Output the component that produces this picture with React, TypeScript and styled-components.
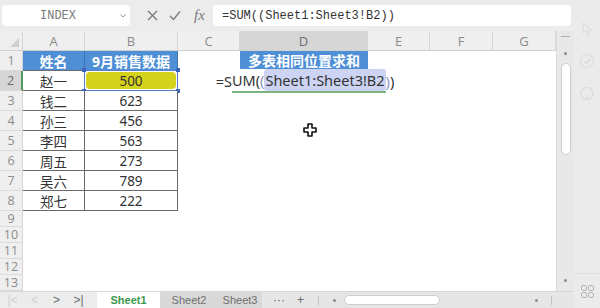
import React from 'react';
import styled, { createGlobalStyle } from 'styled-components';

const Global = createGlobalStyle`
  html, body { margin: 0; padding: 0; background: #ebebeb; }
  body { font-family: "Noto Sans", "Noto Sans CJK SC", sans-serif; }
  #root { width: 600px; height: 308px; }
`;

const Frame = styled.div`
  width: 600px;
  height: 308px;
  display: flex;
  overflow: hidden;
  background: #ebebeb;
`;

const Main = styled.div`
  width: 574px;
  display: flex;
  flex-direction: column;
`;

const FormulaBar = styled.div`
  height: 31px;
  display: flex;
  align-items: center;
  padding: 0 3px 0 2px;
  box-sizing: border-box;
  background: #ececec;
`;

const NameBox = styled.div`
  width: 128px;
  height: 21px;
  background: #fff;
  border-radius: 4px;
  display: flex;
  align-items: center;
  box-sizing: border-box;
  padding: 0 4px 0 0;
  font-family: "Liberation Mono", monospace;
  font-size: 12px;
  color: #7a7a7a;
`;

const NameText = styled.span`
  flex: 1;
  text-align: center;
  padding-right: 6px;
`;

const BarIcons = styled.div`
  display: flex;
  align-items: center;
  gap: 11px;
  margin-left: 17px;
  color: #7a7a7a;
`;

const Fx = styled.span`
  font-family: "Liberation Serif", serif;
  font-style: italic;
  font-size: 15px;
  color: #7a7a7a;
  margin-left: 2px;
`;

const FormulaInput = styled.div`
  margin-left: auto;
  width: 358px;
  height: 21px;
  background: #fff;
  border-radius: 4px;
  display: flex;
  align-items: center;
  padding-left: 9px;
  box-sizing: border-box;
  font-family: "Liberation Mono", monospace;
  font-size: 12px;
  color: #333;
`;

const Body = styled.div`
  display: flex;
  height: 260px;
`;

const Sheet = styled.div`
  position: relative;
  width: 556px;
  display: grid;
  grid-template-columns: 23px 62px 93px 62px 128px 62px 63px 63px;
  grid-template-rows: 20px repeat(8, 20px) repeat(5, 16px);
  background: #fff;
`;

const Corner = styled.div`
  background: #efefef;
  border-right: 1px solid #d6d6d6;
  border-bottom: 1px solid #d0d0d0;
  position: relative;
  &::after {
    content: '';
    position: absolute;
    right: 3px;
    bottom: 3px;
    border-style: solid;
    border-width: 0 0 9px 9px;
    border-color: transparent transparent #cfcfcf transparent;
  }
`;

const ColHead = styled.div<{ $active?: boolean }>`
  background: ${p => (p.$active ? '#d6d6d6' : '#efefef')};
  border-right: 1px solid #d6d6d6;
  border-bottom: 1px solid #d0d0d0;
  color: ${p => (p.$active ? '#707070' : '#8c8c8c')};
  font-family: "Open Sans", sans-serif;
  font-size: 13px;
  display: flex;
  align-items: center;
  justify-content: center;
`;

const RowHead = styled.div<{ $active?: boolean }>`
  background: ${p => (p.$active ? '#d6d6d6' : '#efefef')};
  border-right: ${p => (p.$active ? '2px solid #4f9c5e' : '1px solid #d6d6d6')};
  border-bottom: 1px solid #dadada;
  color: ${p => (p.$active ? '#6a6a6a' : '#8c8c8c')};
  font-family: "Open Sans", sans-serif;
  font-size: 12.5px;
  display: flex;
  align-items: center;
  justify-content: center;
`;

const Empty = styled.div``;

const TableCell = styled.div<{ $head?: boolean }>`
  position: relative;
  display: flex;
  align-items: center;
  justify-content: center;
  background: ${p => (p.$head ? '#4f8fd6' : '#fff')};
  color: ${p => (p.$head ? '#fff' : '#333')};
  font-weight: ${p => (p.$head ? 700 : 400)};
  font-size: ${p => (p.$head ? '14px' : '13.5px')};
  border-right: 1px solid ${p => (p.$head ? '#3f74b0' : '#6a6a6a')};
  border-bottom: 1px solid #6a6a6a;
  font-family: "Noto Sans", "Noto Sans CJK SC", sans-serif;
`;

const RefCell = styled.div`
  position: relative;
  border: 1px solid #5a7ec8;
  margin: -1px 0 0 -1px;
  padding: 1px;
  display: flex;
`;

const RefFill = styled.div`
  flex: 1;
  background: #d5d21c;
  border-radius: 4px;
  display: flex;
  align-items: center;
  justify-content: center;
  font-size: 13.5px;
  color: #333;
`;

const Handle = styled.span<{ $x: 'l' | 'r'; $y: 't' | 'b' }>`
  position: absolute;
  width: 4px;
  height: 4px;
  background: #3d66bb;
  ${p => (p.$x === 'l' ? 'left: -3px;' : 'right: -3px;')}
  ${p => (p.$y === 't' ? 'top: -3px;' : 'bottom: -3px;')}
`;

const TitleCell = styled.div`
  display: flex;
  align-items: center;
  justify-content: center;
  background: #4f8fd6;
  color: #fff;
  font-weight: 700;
  font-size: 14px;
  margin-bottom: 2px;
`;

const EditCell = styled.div`
  position: relative;
  z-index: 2;
  display: flex;
  align-items: center;
  justify-content: center;
  overflow: visible;
  white-space: nowrap;
  font-family: "Noto Sans", sans-serif;
  font-size: 14.5px;
  color: #333;
  padding-left: 4px;
`;

const Faint = styled.span`
  color: #8a98c0;
`;

const Underlined = styled.span`
  border-bottom: 2px solid #7db37d;
  padding-bottom: 1px;
`;

const Highlight = styled.span`
  background: #cdd3f3;
  border-radius: 3px;
  padding: 1px 1px;
`;

const Caret = styled.span`
  display: inline-block;
  width: 1px;
  height: 19px;
  background: #111;
  margin-left: 2px;
`;

const MoveCursor = styled.div`
  position: absolute;
  left: 303px;
  top: 89px;
  width: 14px;
  height: 14px;
`;

const VScroll = styled.div`
  width: 18px;
  background: #e8e8e8;
  border-left: 1px solid #dcdcdc;
  display: flex;
  flex-direction: column;
  align-items: center;
  box-sizing: border-box;
  padding-top: 5px;
`;

const Dash = styled.span`
  width: 9px;
  height: 1px;
  background: #b0b0b0;
`;

const Dot = styled.span<{ $mt?: number }>`
  width: 3px;
  height: 3px;
  border-radius: 50%;
  background: #8a8a8a;
  margin-top: ${p => p.$mt ?? 0}px;
`;

const VThumb = styled.div`
  width: 10px;
  height: 92px;
  margin-top: 8px;
  background: #fff;
  border: 1px solid #cdcdcd;
  border-radius: 6px;
  box-sizing: border-box;
`;

const TabBar = styled.div`
  height: 17px;
  display: flex;
  align-items: stretch;
  background: #e6e6e6;
  border-top: 1px solid #d6d6d6;
  box-sizing: border-box;
  font-family: "Liberation Sans", sans-serif;
  font-size: 11px;
`;

const Nav = styled.div`
  width: 97px;
  display: flex;
  align-items: center;
  padding-left: 5px;
  gap: 7px;
  box-sizing: border-box;
  background: #ececec;
`;

const NavGlyph = styled.span<{ $dim?: boolean }>`
  width: 15px;
  text-align: center;
  white-space: nowrap;
  color: ${p => (p.$dim ? '#cfcfcf' : '#6a6a6a')};
  font-size: 12px;
  line-height: 1;
`;

const Tab = styled.div<{ $active?: boolean; $w: number }>`
  width: ${p => p.$w}px;
  display: flex;
  align-items: center;
  justify-content: center;
  background: ${p => (p.$active ? '#fff' : '#d9d9d9')};
  color: ${p => (p.$active ? '#3d9a4d' : '#6e6e6e')};
  font-weight: ${p => (p.$active ? 700 : 400)};
`;

const TabExtra = styled.div`
  display: flex;
  align-items: center;
  gap: 12px;
  padding-left: 11px;
  color: #6a6a6a;
  font-size: 12px;
`;

const HScroll = styled.div`
  flex: 1;
  display: flex;
  align-items: center;
  padding-left: 14px;
`;

const Sep = styled.span`
  width: 1px;
  height: 9px;
  background: #c4c4c4;
`;

const HThumb = styled.div`
  width: 96px;
  height: 10px;
  margin-left: 8px;
  background: #fff;
  border: 1px solid #cdcdcd;
  border-radius: 6px;
  box-sizing: border-box;
`;

const Spacer = styled.span<{ $fixed?: number }>`
  flex: ${p => (p.$fixed ? `0 0 ${p.$fixed}px` : '1')};
`;

const Side = styled.div`
  flex: 1;
  display: flex;
  flex-direction: column;
  align-items: center;
  padding-top: 22px;
  gap: 17px;
  background: #ebebeb;
`;

const SideBottom = styled.div`
  margin-top: auto;
  width: 100%;
  height: 34px;
  border-top: 1px solid #dedede;
  display: flex;
  align-items: center;
  justify-content: center;
`;

const cols = ['A', 'B', 'C', 'D', 'E', 'F', 'G'];
const data: [string, string][] = [
  ['赵一', '500'],
  ['钱二', '623'],
  ['孙三', '456'],
  ['李四', '563'],
  ['周五', '273'],
  ['吴六', '789'],
  ['郑七', '222'],
];

export default function App() {
  const rows: React.ReactNode[] = [];
  for (let r = 1; r <= 13; r++) {
    rows.push(<RowHead key={`h${r}`} $active={r === 2}>{r}</RowHead>);
    if (r === 1) {
      rows.push(<TableCell key="a1" $head>姓名</TableCell>);
      rows.push(<TableCell key="b1" $head>9月销售数据</TableCell>);
      rows.push(<Empty key="c1" />);
      rows.push(<TitleCell key="d1">多表相同位置求和</TitleCell>);
      rows.push(<Empty key="e1" />, <Empty key="f1" />, <Empty key="g1" />);
    } else if (r <= 8) {
      const [name, val] = data[r - 2];
      rows.push(<TableCell key={`a${r}`}>{name}</TableCell>);
      if (r === 2) {
        rows.push(
          <RefCell key="b2">
            <RefFill>{val}</RefFill>
            <Handle $x="l" $y="t" />
            <Handle $x="r" $y="t" />
            <Handle $x="l" $y="b" />
            <Handle $x="r" $y="b" />
          </RefCell>
        );
      } else {
        rows.push(<TableCell key={`b${r}`}>{val}</TableCell>);
      }
      rows.push(<Empty key={`c${r}`} />);
      if (r === 2) {
        rows.push(
          <EditCell key="d2">
            =S<Underlined>UM(<Faint>(</Faint><Highlight>Sheet1:Sheet3!B2</Highlight></Underlined>
            <Faint>)</Faint>)<Caret />
          </EditCell>
        );
      } else {
        rows.push(<Empty key={`d${r}`} />);
      }
      rows.push(<Empty key={`e${r}`} />, <Empty key={`f${r}`} />, <Empty key={`g${r}`} />);
    } else {
      for (let c = 0; c < 7; c++) rows.push(<Empty key={`x${r}${c}`} />);
    }
  }

  return (
    <>
      <Global />
      <Frame>
        <Main>
          <FormulaBar>
            <NameBox>
              <NameText>INDEX</NameText>
              <svg width="6" height="4" viewBox="0 0 6 4">
                <path d="M0.5 0.5 L3 3 L5.5 0.5" fill="none" stroke="#999" strokeWidth="1" />
              </svg>
            </NameBox>
            <BarIcons>
              <svg width="11" height="11" viewBox="0 0 11 11">
                <path d="M1 1 L10 10 M10 1 L1 10" stroke="#7a7a7a" strokeWidth="1.3" fill="none" />
              </svg>
              <svg width="12" height="11" viewBox="0 0 12 11">
                <path d="M1 6 L4.5 9.5 L11 1.5" stroke="#7a7a7a" strokeWidth="1.3" fill="none" />
              </svg>
              <Fx>fx</Fx>
            </BarIcons>
            <FormulaInput>=SUM((Sheet1:Sheet3!B2))</FormulaInput>
          </FormulaBar>
          <Body>
            <Sheet>
              <Corner />
              {cols.map(c => (
                <ColHead key={c} $active={c === 'D'}>{c}</ColHead>
              ))}
              {rows}
              <MoveCursor>
                <svg width="14" height="14" viewBox="0 0 14 14">
                  <path
                    d="M5 1 H9 V5 H13 V9 H9 V13 H5 V9 H1 V5 H5 Z"
                    fill="#fff"
                    stroke="#111"
                    strokeWidth="1.6"
                    strokeLinejoin="round"
                  />
                </svg>
              </MoveCursor>
            </Sheet>
            <VScroll>
              <Dash />
              <Dot $mt={15} />
              <VThumb />
              <Spacer />
              <Dot />
              <Spacer $fixed={9} />
            </VScroll>
          </Body>
          <TabBar>
            <Nav>
              <NavGlyph $dim>|&lt;</NavGlyph>
              <NavGlyph $dim>&lt;</NavGlyph>
              <NavGlyph>&gt;</NavGlyph>
              <NavGlyph>&gt;|</NavGlyph>
            </Nav>
            <Tab $active $w={63}>Sheet1</Tab>
            <Tab $w={58}>Sheet2</Tab>
            <Tab $w={44}>Sheet3</Tab>
            <TabExtra>
              <span>···</span>
              <span>+</span>
            </TabExtra>
            <HScroll>
              <Sep />
              <Spacer $fixed={14} />
              <Dot />
              <HThumb />
              <Spacer />
              <Dot />
              <Spacer $fixed={13} />
              <Sep />
              <Spacer $fixed={22} />
            </HScroll>
          </TabBar>
        </Main>
        <Side>
          <svg width="12" height="14" viewBox="0 0 12 14">
            <path d="M2 1 L2 11 L5 8.5 L7 13 L8.5 12.3 L6.6 8 L10.5 8 Z" fill="none" stroke="#dadada" strokeWidth="1" />
          </svg>
          <svg width="16" height="16" viewBox="0 0 16 16">
            <circle cx="8" cy="8" r="6.5" fill="none" stroke="#dadada" strokeWidth="1.2" />
            <path d="M5 8.5 L7.2 10.5 L11 6" fill="none" stroke="#dadada" strokeWidth="1.2" />
          </svg>
          <svg width="16" height="16" viewBox="0 0 16 16">
            <circle cx="8" cy="7.5" r="6" fill="none" stroke="#dadada" strokeWidth="1.2" />
            <path d="M6 13.5 L8 11 L10 13.5" fill="none" stroke="#dadada" strokeWidth="1.2" />
          </svg>
          <SideBottom>
            <svg width="13" height="13" viewBox="0 0 13 13">
              <rect x="0.5" y="0.5" width="5" height="5" rx="1.5" fill="none" stroke="#b5b5b5" />
              <rect x="7.5" y="0.5" width="5" height="5" rx="1.5" fill="none" stroke="#b5b5b5" />
              <rect x="0.5" y="7.5" width="5" height="5" rx="1.5" fill="none" stroke="#b5b5b5" />
              <rect x="7.5" y="7.5" width="5" height="5" rx="1.5" fill="none" stroke="#b5b5b5" />
            </svg>
          </SideBottom>
        </Side>
      </Frame>
    </>
  );
}
